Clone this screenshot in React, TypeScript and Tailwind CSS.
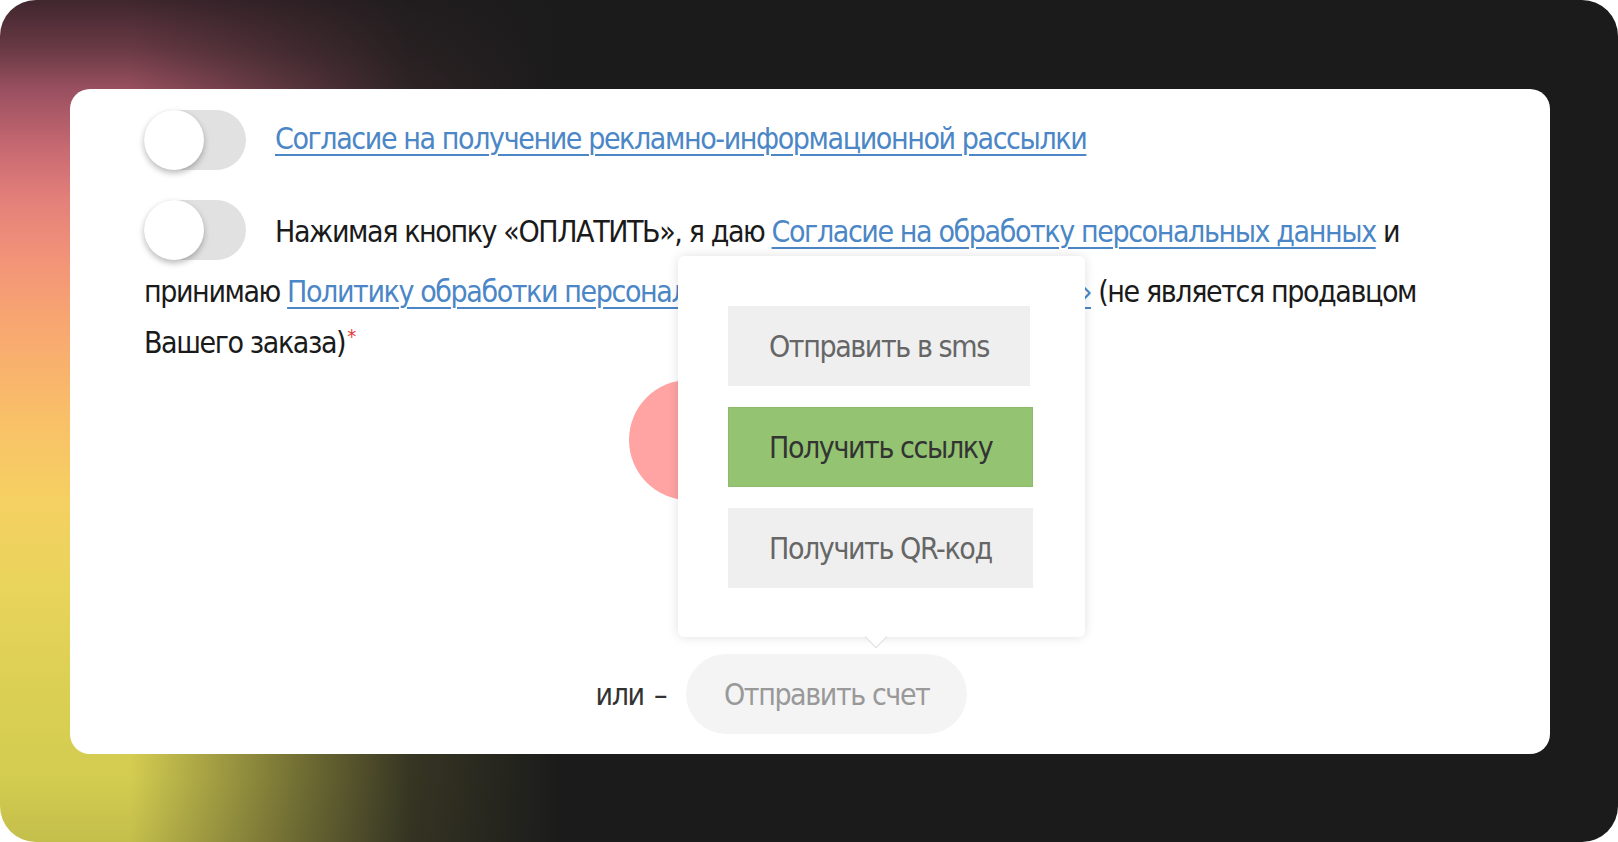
import React from "react";

// Consent block with the "send invoice" popover opened over the pay button.
// Sizes are taken from a 2x phone capture, hence the large type.

const FONT = "font-['Liberation_Sans_Narrow','DejaVu_Sans_Condensed','Liberation_Sans',sans-serif]";

function Toggle({ inline = false }: { inline?: boolean }) {
  return (
    <span
      className={
        inline
          ? "mr-[29px] mb-[6px] inline-flex h-[60px] w-[102px] items-center rounded-full bg-[#e1e1e1] align-middle"
          : "flex h-[60px] w-[102px] shrink-0 items-center rounded-full bg-[#e1e1e1]"
      }
    >
      <span className="h-[60px] w-[60px] rounded-full bg-white shadow-[0_3px_6px_rgba(0,0,0,0.28)]" />
    </span>
  );
}

function Link({ children }: { children: React.ReactNode }) {
  return (
    <a
      href="#"
      className="text-[#4b86c6] underline decoration-2 underline-offset-[5px]"
    >
      {children}
    </a>
  );
}

function PopButton({ label, active = false }: { label: string; active?: boolean }) {
  return (
    <button
      type="button"
      className={
        active
          ? "flex h-[80px] items-center whitespace-nowrap border border-[#8cbb6a] bg-[#94c472] px-[40px] text-[30px] tracking-[-1.4px] text-[#333333]"
          : "flex h-[80px] items-center whitespace-nowrap bg-[#efefef] px-[41px] text-[30px] tracking-[-1.4px] text-[#666666]"
      }
    >
      {label}
    </button>
  );
}

export default function App() {
  return (
    <div className="min-h-screen bg-white">
      <div className="h-[842px] w-[1618px] overflow-hidden rounded-[36px] bg-[#1b1b1b] bg-[linear-gradient(to_right,rgba(27,27,27,0)_0px,rgba(27,27,27,0)_130px,rgba(27,27,27,0.5)_290px,rgba(27,27,27,0.85)_410px,#1b1b1b_560px),linear-gradient(to_bottom,#40262e_0px,#6a3a45_50px,#9a5060_90px,#c86a72_150px,#e4807a_200px,#f29478_260px,#f8a870_330px,#f9c068_420px,#f5d062_500px,#ead45c_580px,#dcd054_680px,#d2cc50_780px,#c4be4c_842px)] pl-[70px] pt-[89px]">
        <div
          className={`relative h-[665px] w-[1480px] rounded-[20px] bg-white px-[74px] pt-[21px] text-[30px] tracking-[-1.4px] text-[#1a1a1a] ${FONT}`}
        >
          {/* marketing consent */}
          <div className="flex items-center gap-[29px] leading-[51px]">
            <Toggle />
            <span className="mb-[4px]">
              <Link>Согласие на получение рекламно-информационной рассылки</Link>
            </span>
          </div>

          {/* personal data consent, toggle sits inline with the text */}
          <p className="mt-[30px] leading-[51px]">
            <Toggle inline />
            Нажимая кнопку «ОПЛАТИТЬ», я даю{" "}
            <Link>Согласие на обработку персональных данных</Link> и принимаю{" "}
            <Link>Политику обработки персональных данных ООО «ПэйТрейд»</Link>{" "}
            (не является продавцом Вашего заказа)
            <sup className="ml-[2px] text-[20px] text-[#e53935]">*</sup>
          </p>

          <div className="mx-auto mt-[12px] flex h-[120px] w-[362px] items-center justify-center rounded-full bg-[#ffa3a3] text-white">
            ОПЛАТИТЬ
          </div>

          <div className="mt-[154px] flex items-center justify-center pr-[57px]">
            <span className="mr-[20px] text-[#333333]">
              или <span className="ml-[3px]">–</span>
            </span>
            <button
              type="button"
              className="flex h-[80px] items-center whitespace-nowrap rounded-full bg-[#f4f4f4] px-[38px] text-[30px] tracking-[-1.4px] text-[#999999]"
            >
              Отправить счет
            </button>
          </div>

          {/* popover */}
          <div className="absolute left-[608px] top-[167px] h-[381px] w-[407px] rounded-[6px] bg-white px-[50px] pt-[50px] shadow-[0_0_12px_rgba(0,0,0,0.12)]">
            <div className="flex flex-col items-start gap-[21px]">
              <PopButton label="Отправить в sms" />
              <PopButton label="Получить ссылку" active />
              <PopButton label="Получить QR-код" />
            </div>
            <span className="absolute bottom-[-8px] left-[198px] h-[16px] w-[16px] -translate-x-1/2 rotate-45 border-b border-r border-[#dddddd] bg-white" />
          </div>
        </div>
      </div>
    </div>
  );
}
